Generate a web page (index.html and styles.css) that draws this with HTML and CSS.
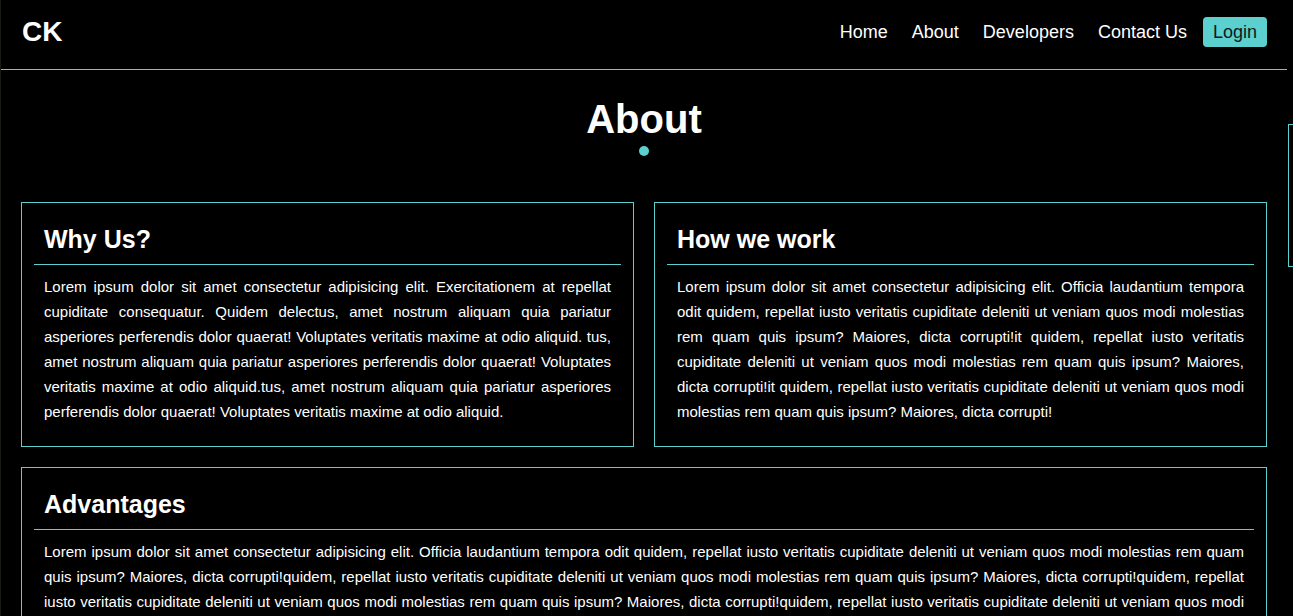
FILE: index.html
```html
<!DOCTYPE html>
<html lang="en">
<head>
<meta charset="utf-8">
<title>About - CK</title>
<link rel="stylesheet" href="styles.css">
</head>
<body>
<div class="page">
  <header class="topbar">
    <div class="logo">CK</div>
    <nav class="nav">
      <a class="nav-link" href="#">Home</a>
      <a class="nav-link" href="#">About</a>
      <a class="nav-link" href="#">Developers</a>
      <a class="nav-link" href="#">Contact Us</a>
      <a class="nav-login" href="#">Login</a>
    </nav>
  </header>
  <main class="about">
    <h1 class="about-title">About</h1>
    <div class="about-dot"></div>
    <div class="card-grid">
      <section class="card">
        <h2 class="card-title">Why Us?</h2>
        <p class="card-text">Lorem ipsum dolor sit amet consectetur adipisicing elit. Exercitationem at repellat cupiditate consequatur. Quidem delectus, amet nostrum aliquam quia pariatur asperiores perferendis dolor quaerat! Voluptates veritatis maxime at odio aliquid. tus, amet nostrum aliquam quia pariatur asperiores perferendis dolor quaerat! Voluptates veritatis maxime at odio aliquid.tus, amet nostrum aliquam quia pariatur asperiores perferendis dolor quaerat! Voluptates veritatis maxime at odio aliquid.</p>
      </section>
      <section class="card">
        <h2 class="card-title">How we work</h2>
        <p class="card-text">Lorem ipsum dolor sit amet consectetur adipisicing elit. Officia laudantium tempora odit quidem, repellat iusto veritatis cupiditate deleniti ut veniam quos modi molestias rem quam quis ipsum? Maiores, dicta corrupti!it quidem, repellat iusto veritatis cupiditate deleniti ut veniam quos modi molestias rem quam quis ipsum? Maiores, dicta corrupti!it quidem, repellat iusto veritatis cupiditate deleniti ut veniam quos modi molestias rem quam quis ipsum? Maiores, dicta corrupti!</p>
      </section>
      <section class="card card-wide">
        <h2 class="card-title">Advantages</h2>
        <p class="card-text">Lorem ipsum dolor sit amet consectetur adipisicing elit. Officia laudantium tempora odit quidem, repellat iusto veritatis cupiditate deleniti ut veniam quos modi molestias rem quam quis ipsum? Maiores, dicta corrupti!quidem, repellat iusto veritatis cupiditate deleniti ut veniam quos modi molestias rem quam quis ipsum? Maiores, dicta corrupti!quidem, repellat iusto veritatis cupiditate deleniti ut veniam quos modi molestias rem quam quis ipsum? Maiores, dicta corrupti!quidem, repellat iusto veritatis cupiditate deleniti ut veniam quos modi molestias rem quam quis ipsum? Maiores, dicta corrupti!quidem, repellat iusto veritatis cupiditate deleniti ut veniam quos modi molestias rem quam quis ipsum? Maiores, dicta corrupti!</p>
      </section>
    </div>
  </main>
</div>
<aside class="side-panel"></aside>
</body>
</html>
```
FILE: styles.css
```css
html, body {
  margin: 0;
  padding: 0;
}

body {
  position: relative;
  background: #000;
  border-left: 1px solid #1c1915;
  color: #fff;
  font-family: "Liberation Sans", Arial, sans-serif;
  overflow-x: hidden;
  min-height: 616px;
}

.page {
  margin-right: 6px;
}

.topbar {
  display: flex;
  align-items: center;
  justify-content: space-between;
  padding: 17px 20px 22px 21px;
  border-bottom: 1px solid #5ccfcf;
}

.logo {
  font-size: 28px;
  font-weight: bold;
  line-height: 30px;
  color: #fff;
}

.nav {
  display: flex;
  align-items: center;
}

.nav-link {
  color: #fff;
  text-decoration: none;
  font-size: 18px;
  line-height: 20px;
  padding: 5px 12px;
}

.nav-login {
  margin-left: 4px;
  color: #0b1a1a;
  text-decoration: none;
  font-size: 18px;
  line-height: 20px;
  padding: 5px 10px;
  background: #5ccfcf;
  border-radius: 4px;
}

.about {
  padding: 26px 20px 20px;
}

.about-title {
  margin: 0;
  text-align: center;
  font-size: 40px;
  line-height: 46px;
  font-weight: bold;
}

.about-dot {
  width: 10px;
  height: 10px;
  border-radius: 50%;
  background: #5ccfcf;
  margin: 4px auto 46px;
}

.card-grid {
  display: grid;
  grid-template-columns: 1fr 1fr;
  gap: 20px;
}

.card {
  border: 1px solid #5ccfcf;
  padding: 12px;
}

.card-wide {
  grid-column: 1 / span 2;
}

.card-title {
  margin: 0;
  padding: 10px 10px 11px;
  font-size: 25px;
  line-height: 28px;
  font-weight: bold;
  border-bottom: 1px solid #5ccfcf;
}

.card-text {
  margin: 9px 0 10px;
  padding: 0 10px;
  font-size: 15px;
  line-height: 25px;
  text-align: justify;
}

.side-panel {
  position: absolute;
  top: 124px;
  left: 1287px;
  width: 300px;
  height: 141px;
  border: 1px solid #5ccfcf;
  background: #000;
}
```
